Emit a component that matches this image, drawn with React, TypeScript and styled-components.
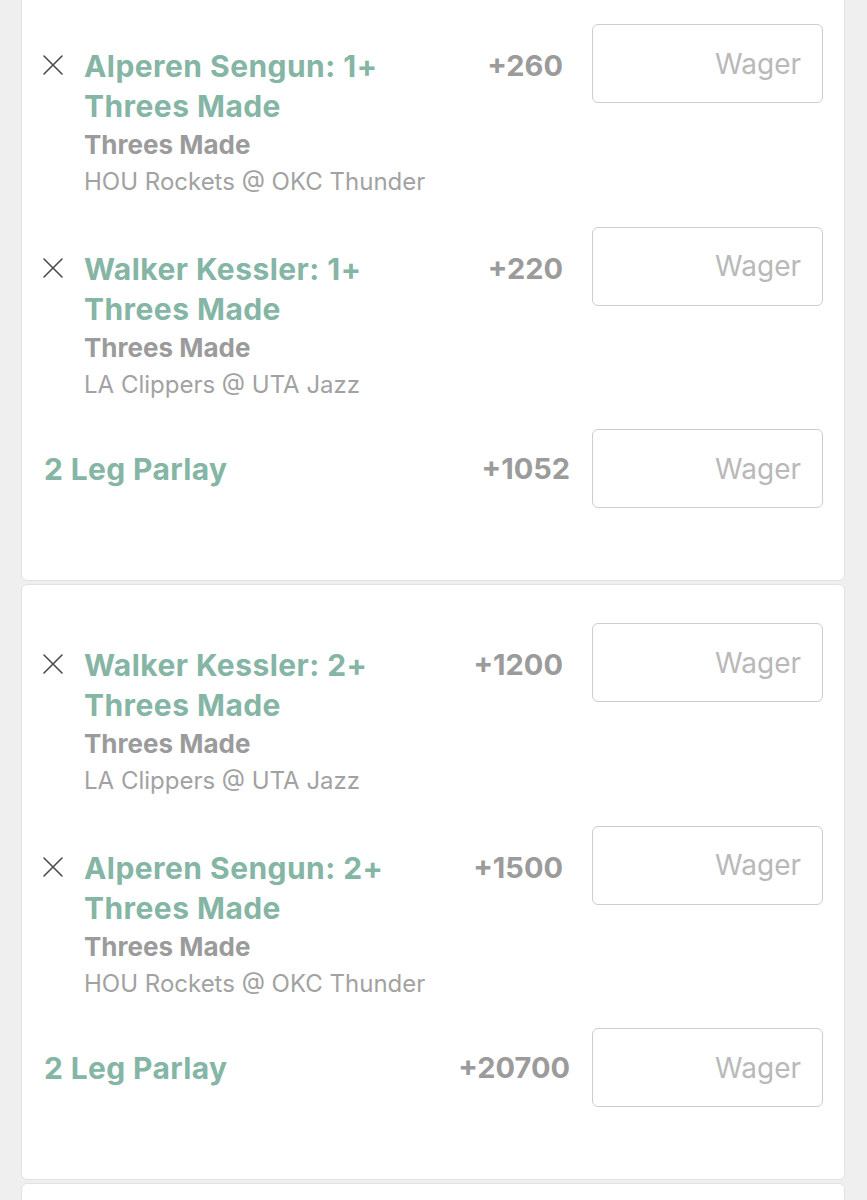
import React from "react";
import styled, { createGlobalStyle } from "styled-components";

const GlobalStyle = createGlobalStyle`
  html, body { margin: 0; padding: 0; background: #efefef; }
  body { font-family: Inter, "Noto Sans", Roboto, sans-serif; -webkit-font-smoothing: antialiased; }
  * { box-sizing: border-box; }
`;

const Page = styled.main`
  height: 1200px;
  overflow: hidden;
  background: #efefef;
  padding: 0 22px 0 21px;
  display: flex;
  flex-direction: column;
  gap: 3px;
`;

const Card = styled.section<{ $scrolled?: boolean }>`
  background: #ffffff;
  border: 1px solid #e2e2e2;
  border-radius: 6px;
  padding: 38px 21px 72px 20px;
  display: flex;
  flex-direction: column;
  gap: 27.5px;
  margin-top: ${(p) => (p.$scrolled ? "-15px" : "0")};
  flex-shrink: 0;
`;

const LegRow = styled.div`
  display: grid;
  grid-template-columns: 42px 1fr auto 231px;
  align-items: start;
`;

const RemoveButton = styled.button`
  border: none;
  background: none;
  padding: 0;
  margin-top: 30px;
  width: 22px;
  height: 22px;
  display: flex;
  align-items: center;
  justify-content: center;
  color: #4a4a4a;
  cursor: pointer;
`;

const LegInfo = styled.div`
  padding-top: 22px;
  display: flex;
  flex-direction: column;
`;

const LegTitle = styled.div`
  max-width: 320px;
  font-size: 30px;
  line-height: 40px;
  font-weight: 700;
  letter-spacing: 0.45px;
  color: #85b5a5;
`;

const Market = styled.div`
  font-size: 26px;
  line-height: 38px;
  font-weight: 700;
  color: #9b9b9b;
`;

const Matchup = styled.div`
  font-size: 24px;
  line-height: 35px;
  font-weight: 400;
  color: #a2a2a2;
`;

const Odds = styled.div<{ $gap: number; $top?: number }>`
  font-size: 29px;
  line-height: 40px;
  font-weight: 700;
  color: #9b9b9b;
  text-align: right;
  margin-right: ${(p) => p.$gap}px;
  margin-top: ${(p) => p.$top ?? 0}px;
`;

const WagerInput = styled.input`
  width: 231px;
  height: 79px;
  border: 1.5px solid #cdcdcd;
  border-radius: 6px;
  background: #fff;
  text-align: right;
  padding: 0 21px 0 12px;
  font-family: Inter, "Noto Sans", sans-serif;
  font-size: 28px;
  color: #555;
  outline: none;
  &::placeholder { color: #b9b9b9; }
`;

const ParlayRow = styled.div`
  display: grid;
  grid-template-columns: 1fr auto 231px;
  align-items: center;
`;

const ParlayLabel = styled.div`
  padding-left: 2px;
  font-size: 30px;
  line-height: 40px;
  font-weight: 700;
  letter-spacing: 0.35px;
  color: #85b5a5;
`;

const CloseIcon = () => (
  <svg width="22" height="22" viewBox="0 0 22 22" fill="none">
    <path d="M2 2 L20 20 M20 2 L2 20" stroke="currentColor" strokeWidth="1.6" strokeLinecap="round" />
  </svg>
);

type Leg = { title: string; market: string; matchup: string; odds: string };
type Slip = { legs: Leg[]; parlayOdds: string };

const slips: Slip[] = [
  {
    legs: [
      { title: "Alperen Sengun: 1+ Threes Made", market: "Threes Made", matchup: "HOU Rockets @ OKC Thunder", odds: "+260" },
      { title: "Walker Kessler: 1+ Threes Made", market: "Threes Made", matchup: "LA Clippers @ UTA Jazz", odds: "+220" },
    ],
    parlayOdds: "+1052",
  },
  {
    legs: [
      { title: "Walker Kessler: 2+ Threes Made", market: "Threes Made", matchup: "LA Clippers @ UTA Jazz", odds: "+1200" },
      { title: "Alperen Sengun: 2+ Threes Made", market: "Threes Made", matchup: "HOU Rockets @ OKC Thunder", odds: "+1500" },
    ],
    parlayOdds: "+20700",
  },
];

export default function App() {
  return (
    <>
      <GlobalStyle />
      <Page>
        {slips.map((slip, i) => (
          <Card key={i} $scrolled={i === 0}>
            {slip.legs.map((leg, j) => (
              <LegRow key={j}>
                <RemoveButton aria-label="Remove">
                  <CloseIcon />
                </RemoveButton>
                <LegInfo>
                  <LegTitle>{leg.title}</LegTitle>
                  <Market>{leg.market}</Market>
                  <Matchup>{leg.matchup}</Matchup>
                </LegInfo>
                <Odds $gap={29} $top={22}>{leg.odds}</Odds>
                <WagerInput placeholder="Wager" />
              </LegRow>
            ))}
            <ParlayRow>
              <ParlayLabel>2 Leg Parlay</ParlayLabel>
              <Odds $gap={22}>{slip.parlayOdds}</Odds>
              <WagerInput placeholder="Wager" />
            </ParlayRow>
          </Card>
        ))}
        <Card />
      </Page>
    </>
  );
}
